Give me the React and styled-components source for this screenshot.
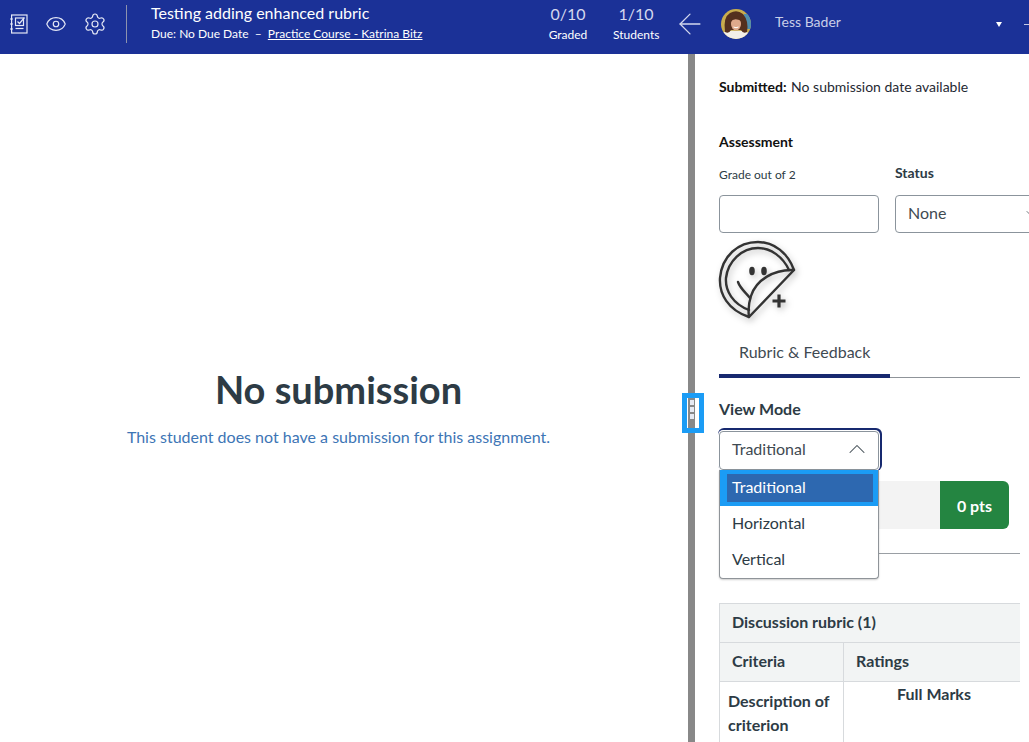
import React from 'react';
import styled, { createGlobalStyle } from 'styled-components';
import { ArrowLeft, ChevronDown, ChevronUp, Eye, Settings } from 'lucide-react';

const GlobalStyle = createGlobalStyle`
    html, body {
        margin: 0;
        height: 100%;
        overflow: hidden;
        background: #fff;
    }
    body {
        font-family: Lato, 'Liberation Sans', sans-serif;
        color: #2d3b45;
    }
    * {
        box-sizing: border-box;
    }
`;

const Page = styled.div`
    position: relative;
    display: flex;
    flex-direction: column;
    width: 1029px;
    height: 742px;
    overflow: hidden;
`;

const Header = styled.header`
    display: flex;
    align-items: flex-start;
    flex: 0 0 54px;
    height: 54px;
    background: #1b3197;
    color: #fff;
    & > * {
        flex-shrink: 0;
    }
`;

const IconGroup = styled.div`
    display: flex;
    align-items: center;
    gap: 16px;
    width: 126px;
    height: 48px;
    padding-left: 9px;
    color: #e4e7f5;
`;

const Divider = styled.div`
    width: 1px;
    height: 38px;
    margin-top: 5px;
    background: #8d93ae;
`;

const TitleBlock = styled.div`
    width: 396px;
    padding: 3px 0 0 24px;
`;

const Title = styled.div`
    font-size: 16px;
    line-height: 20px;
`;

const SubTitle = styled.div`
    margin-top: 3px;
    font-size: 12px;
    line-height: 16px;
    white-space: pre;
`;

const CourseLink = styled.a`
    color: #fff;
    text-decoration: underline;
`;

const Stats = styled.div`
    display: flex;
    width: 158px;
`;

const Stat = styled.div`
    width: ${(p) => p.$width}px;
    padding-top: 4px;
    text-align: center;
`;

const StatValue = styled.div`
    font-size: 16px;
    line-height: 20px;
    color: #d4d8ee;
`;

const StatLabel = styled.div`
    margin-top: 3px;
    font-size: 12px;
    line-height: 16px;
`;

const BackArrow = styled.div`
    display: flex;
    justify-content: center;
    width: 22px;
    margin: 7px 0 0 -2px;
    color: #d4d8ee;
`;

const Avatar = styled.svg`
    width: 30px;
    height: 30px;
    margin: 9px 0 0 20px;
    border-radius: 50%;
`;

const UserName = styled.div`
    width: 245px;
    padding: 13px 0 0 24px;
    font-size: 14px;
    line-height: 18px;
    color: #c9cee8;
`;

const Caret = styled.div`
    width: 0;
    height: 0;
    margin-top: 22px;
    border-left: 3px solid transparent;
    border-right: 3px solid transparent;
    border-top: 5px solid #fff;
`;

const NextArrow = styled.div`
    width: 8px;
    height: 1px;
    margin: 24px 0 0 22px;
    background: #c5cbe6;
`;

const Body = styled.div`
    display: flex;
    flex: 1;
    min-height: 0;
`;

const Viewer = styled.main`
    flex: 0 0 688px;
    padding-top: 314px;
    text-align: center;
`;

const ViewerTitle = styled.h1`
    margin: 0 0 0 -11px;
    font-size: 38px;
    line-height: 42px;
    font-weight: 700;
    color: #2d3b45;
`;

const ViewerText = styled.p`
    margin: 17px 0 0 -11px;
    font-size: 16px;
    line-height: 20px;
    color: #3d75b5;
`;

const Splitter = styled.div`
    flex: 0 0 7px;
    background: #888;
`;

const Side = styled.aside`
    flex: 0 0 334px;
    width: 334px;
    padding: 24px 0 0 24px;
`;

const Submitted = styled.div`
    font-size: 14px;
    line-height: 18px;
    color: #1f2933;
    b {
        margin-right: 1px;
        color: #111;
    }
`;

const SectionTitle = styled.div`
    margin-top: 37px;
    font-size: 14px;
    line-height: 18px;
    font-weight: 700;
    color: #111;
`;

const AssessmentRow = styled.div`
    display: flex;
    gap: 16px;
    margin-top: 14px;
`;

const Field = styled.div`
    flex: 0 0 ${(p) => p.$width || 160}px;
`;

const FieldLabel = styled.div`
    height: 30px;
    font-size: ${(p) => (p.$bold ? 14 : 12)}px;
    line-height: ${(p) => (p.$bold ? 16 : 20)}px;
    font-weight: ${(p) => (p.$bold ? 700 : 400)};
    color: #2d3b45;
`;

const TextBox = styled.div`
    display: flex;
    align-items: center;
    justify-content: space-between;
    height: 38px;
    padding: 0 58px 3px 12px;
    border: 1px solid #8b949c;
    border-radius: 4px;
    font-size: 16px;
    color: #3f4a52;
`;

const Sticker = styled.svg`
    display: block;
    width: 84px;
    height: 84px;
    margin: 5px 0 0 -3px;
    filter: drop-shadow(2px 3px 3px rgba(0, 0, 0, 0.25));
`;

const Tabs = styled.div`
    width: 301px;
    height: 56px;
    border-bottom: 1px solid #8f9499;
`;

const Tab = styled.div`
    width: 171px;
    height: 56px;
    padding: 20px 0 0 20px;
    border-bottom: 4px solid #17296f;
    font-size: 16px;
    line-height: 20px;
    color: #3f4a52;
`;

const ViewModeLabel = styled.div`
    margin-top: 21px;
    font-size: 16px;
    line-height: 20px;
    font-weight: 700;
    color: #2d3b45;
`;

const ScoreBar = styled.div`
    display: flex;
    justify-content: flex-end;
    width: 290px;
    height: 48px;
    margin-top: 62px;
    background: #f3f3f3;
    border-radius: 0 6px 6px 0;
`;

const ScoreBadge = styled.div`
    display: flex;
    align-items: center;
    justify-content: center;
    width: 69px;
    border-radius: 0 6px 6px 0;
    background: #248541;
    color: #fff;
    font-size: 16px;
    font-weight: 700;
`;

const Rule = styled.div`
    width: 301px;
    height: 1px;
    margin-top: 24px;
    background: #9a9fa4;
`;

const Table = styled.div`
    display: grid;
    grid-template-columns: 124px 176px;
    width: 301px;
    margin-top: 49px;
    border-top: 1px solid #d7dadd;
    border-left: 1px solid #d7dadd;
`;

const TableCaption = styled.div`
    grid-column: 1 / 3;
    height: 39px;
    padding: 8px 12px;
    background: #f2f4f4;
    border-bottom: 1px solid #d7dadd;
    font-size: 16px;
    line-height: 20px;
    font-weight: 700;
    color: #2d3b45;
`;

const HeadCell = styled.div`
    height: 39px;
    padding: 8px 12px;
    background: #f2f4f4;
    border-bottom: 1px solid #d7dadd;
    border-right: ${(p) => (p.$divided ? '1px solid #d7dadd' : 'none')};
    font-size: 16px;
    line-height: 20px;
    font-weight: 700;
    color: #2d3b45;
`;

const CriterionCell = styled.div`
    padding: 7px 8px;
    border-right: 1px solid #d7dadd;
    font-size: 16px;
    line-height: 24px;
    font-weight: 700;
    color: #2d3b45;
`;

const RatingCell = styled.div`
    padding: 2px 0 0 4px;
    text-align: center;
    font-size: 16px;
    line-height: 20px;
    font-weight: 700;
    color: #2d3b45;
`;

const SelectButton = styled.div`
    position: absolute;
    top: 431px;
    left: 719px;
    display: flex;
    align-items: center;
    justify-content: space-between;
    width: 160px;
    height: 39px;
    padding: 0 7px 4px 12px;
    border: 1px solid #8b949c;
    border-radius: 4px;
    background: #fff;
    box-shadow: 0 0 0 1px #fff, 1px -1px 0 2px #17296f;
    font-size: 16px;
    color: #3f4a52;
`;

const Menu = styled.ul`
    position: absolute;
    top: 470px;
    left: 719px;
    width: 160px;
    height: 109px;
    margin: 0;
    padding: 0;
    list-style: none;
    background: #fff;
    border: 1px solid #8f9499;
    border-top: none;
    border-radius: 0 0 4px 4px;
    box-shadow: 0 1px 2px rgba(0, 0, 0, 0.2);
    font-size: 16px;
    color: #2d3b45;
`;

const MenuItem = styled.li`
    height: 36px;
    padding: ${(p) => (p.$active ? '3px 0 0 5px' : '7px 0 0 12px')};
    line-height: 20px;
    ${(p) =>
        p.$active &&
        `
        background: #2d68b0;
        border: 4px solid #1b9cf5;
        border-left-width: 7px;
        border-right-width: 5px;
        color: #fff;
    `}
`;

const Handle = styled.div`
    position: absolute;
    top: 393px;
    left: 682px;
    display: flex;
    flex-direction: column;
    gap: 2px;
    width: 22px;
    height: 40px;
    padding: 2px 0 0 3px;
    border: 5px solid #1b9cf5;
    background: linear-gradient(to right, #fff 0 1px, #888 1px 8px, #fff 8px);
`;

const HandleDot = styled.span`
    display: block;
    width: 4px;
    height: 5px;
    background: #e6e9f2;
`;

const AvatarArt = () => (
    <Avatar viewBox='0 0 30 30'>
        <rect width='30' height='30' fill='#c9ad4e' />
        <rect x='23' y='5' width='7' height='15' fill='#4f8fb0' />
        <path d='M0 30 V24 Q8 21 15 22 Q23 21 30 25 V30 Z' fill='#f3efe8' />
        <path d='M4 23 Q2 8 9 4 Q16 0 22 5 Q28 12 26 23 Q22 25 20 21 L10 21 Q8 25 4 23 Z' fill='#54301f' />
        <ellipse cx='15' cy='15' rx='5' ry='6.5' fill='#dfa98c' />
        <path d='M9.500 13 Q13 8 20.500 12 Q19 7 14 7 Q10 8 9.500 13 Z' fill='#54301f' />
        <path d='M12.500 18 Q15 19.500 17.500 18' stroke='#fff' strokeWidth='1' fill='none' />
    </Avatar>
);

const NotebookIcon = () => (
    <svg width='20' height='20' viewBox='0 0 20 20' fill='none' stroke='currentColor' strokeWidth='1.2'>
        <rect x='2.6' y='1' width='15.4' height='18' />
        <path d='M1 5h3M1 10h3M1 15h3' />
        <rect x='6.5' y='4' width='8' height='7.5' />
        <path d='M8.5 7.5l2 2 5-6' />
        <path d='M6.5 14.5h8' />
    </svg>
);

const StickerIcon = () => (
    <Sticker viewBox='0 0 84 84' fill='none' stroke='#333' strokeWidth='2.4' strokeLinecap='round' strokeLinejoin='round'>
        <path d='M33 79 C12 72 3 56 4 40 C6 18 22 4 42 4 C58 4 72 15 78 32 Z' />
        <path d='M33 72 C17 66 9 53 10 40 C12 23 26 10 42 10 C55 10 67 19 73 32' />
        <path d='M78 32 C58 31 40 42 35 58 C33 64 32 72 33 79' />
        <path d='M22 44 C24 50 29 54 34 60' />
        <ellipse cx='36' cy='33' rx='1.6' ry='3' fill='#333' />
        <ellipse cx='48' cy='33' rx='1.6' ry='3' fill='#333' />
        <path d='M56.500 63h13M63 56.500v13' strokeWidth='3.2' strokeLinecap='butt' />
    </Sticker>
);

const App = () => {
    return (
        <Page>
            <GlobalStyle />
            <Header>
                <IconGroup>
                    <NotebookIcon />
                    <Eye size={22} strokeWidth={1.3} />
                    <Settings size={24} strokeWidth={1.2} />
                </IconGroup>
                <Divider />
                <TitleBlock>
                    <Title>Testing adding enhanced rubric</Title>
                    <SubTitle>
                        {'Due: No Due Date  –  '}
                        <CourseLink>Practice Course - Katrina Bitz</CourseLink>
                    </SubTitle>
                </TitleBlock>
                <Stats>
                    <Stat $width={90}>
                        <StatValue>0/10</StatValue>
                        <StatLabel>Graded</StatLabel>
                    </Stat>
                    <Stat $width={46}>
                        <StatValue>1/10</StatValue>
                        <StatLabel>Students</StatLabel>
                    </Stat>
                </Stats>
                <BackArrow>
                    <ArrowLeft size={34} strokeWidth={0.9} style={{ flexShrink: 0 }} />
                </BackArrow>
                <AvatarArt />
                <UserName>Tess Bader</UserName>
                <Caret />
                <NextArrow />
            </Header>
            <Body>
                <Viewer>
                    <ViewerTitle>No submission</ViewerTitle>
                    <ViewerText>This student does not have a submission for this assignment.</ViewerText>
                </Viewer>
                <Splitter />
                <Side>
                    <Submitted>
                        <b>Submitted:</b> No submission date available
                    </Submitted>
                    <SectionTitle>Assessment</SectionTitle>
                    <AssessmentRow>
                        <Field>
                            <FieldLabel>Grade out of 2</FieldLabel>
                            <TextBox />
                        </Field>
                        <Field $width={200}>
                            <FieldLabel $bold>Status</FieldLabel>
                            <TextBox>
                                None
                                <ChevronDown size={12} strokeWidth={1.5} />
                            </TextBox>
                        </Field>
                    </AssessmentRow>
                    <StickerIcon />
                    <Tabs>
                        <Tab>Rubric &amp; Feedback</Tab>
                    </Tabs>
                    <ViewModeLabel>View Mode</ViewModeLabel>
                    <ScoreBar>
                        <ScoreBadge>0 pts</ScoreBadge>
                    </ScoreBar>
                    <Rule />
                    <Table>
                        <TableCaption>Discussion rubric (1)</TableCaption>
                        <HeadCell $divided>Criteria</HeadCell>
                        <HeadCell>Ratings</HeadCell>
                        <CriterionCell>Description of criterion</CriterionCell>
                        <RatingCell>Full Marks</RatingCell>
                    </Table>
                </Side>
            </Body>
            <Handle>
                <HandleDot />
                <HandleDot />
                <HandleDot />
            </Handle>
            <SelectButton>
                Traditional
                <ChevronUp size={28} strokeWidth={0.9} />
            </SelectButton>
            <Menu>
                <MenuItem $active>Traditional</MenuItem>
                <MenuItem>Horizontal</MenuItem>
                <MenuItem>Vertical</MenuItem>
            </Menu>
        </Page>
    );
};

export default App;
